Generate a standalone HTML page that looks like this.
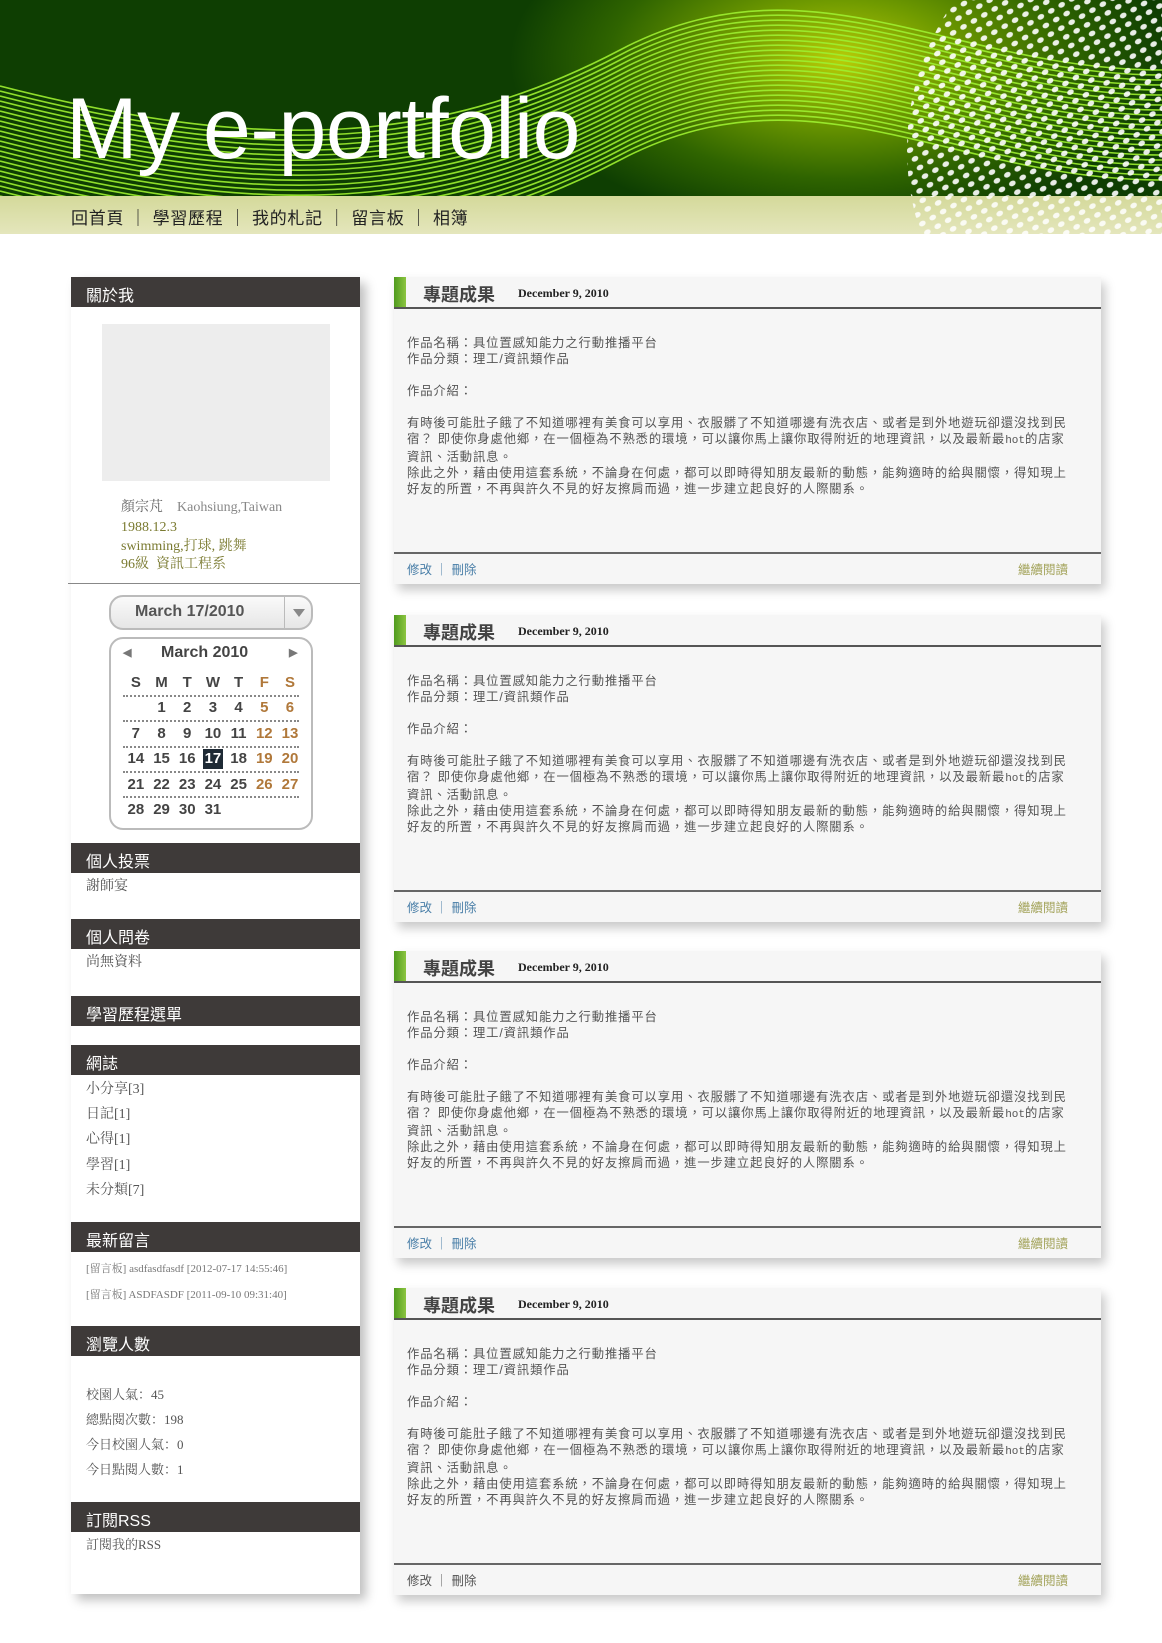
<!DOCTYPE html>
<html><head><meta charset="utf-8"><style>
*{margin:0;padding:0;box-sizing:border-box}
body{width:1162px;height:1643px;background:#fff;font-family:"Liberation Sans","Noto Sans CJK TC",sans-serif;position:relative;overflow:hidden}
.hdr{position:absolute;left:0;top:0;width:1162px;height:196px;overflow:hidden;background:radial-gradient(ellipse 330px 170px at 840px 60px,#b8cc08 0%,#6f9a00 35%,#2f6400 70%,#0e3e02 100%),#0e3e02}
.nav{position:absolute;left:0;top:196px;width:1162px;height:38px;background:linear-gradient(#d4d99a,#e4e6bc);}
.nav span{position:absolute;left:71px;top:8px;font-size:17px;color:#222;letter-spacing:0.7px}
.title{position:absolute;left:66px;top:80px;font-size:86px;color:#fff;font-family:"Liberation Sans",sans-serif;letter-spacing:-0.5px}
.side{position:absolute;left:71px;top:277px;width:289px;height:1317px;background:#fff;box-shadow:6px 6px 10px rgba(0,0,0,.25)}
.bar{position:absolute;left:0;width:289px;height:30px;background:#3e3a39;color:#fff;font-size:16px;padding:5px 0 0 15px}
.it{position:absolute;left:15px;font-family:"Liberation Serif","Noto Serif CJK SC",serif;font-size:14px;color:#555}
.post{position:absolute;left:394px;width:707px;height:307px;background:#f6f6f6;box-shadow:4px 6px 10px rgba(0,0,0,.22)}
.post .gb{position:absolute;left:0;top:0;width:12px;height:31px;background:linear-gradient(90deg,#4f9a1e,#8cc540)}
.post .tl{position:absolute;left:0;top:30px;width:707px;height:2px;background:#555}
.post .h{position:absolute;left:29px;top:4px;font-size:18px;font-weight:bold;color:#444}
.post .d{position:absolute;left:124px;top:9px;font-family:"Liberation Serif",serif;font-weight:bold;font-size:12px;color:#222}
.post .c{position:absolute;left:13px;top:58px;width:672px;font-size:12.3px;letter-spacing:0.9px;line-height:16px;color:#555}
.post .c b{font-family:"Liberation Mono",monospace;font-weight:normal;letter-spacing:0;font-size:11px}
.post .fl{position:absolute;left:0;top:275px;width:707px;height:2px;background:#666}
.post .f{position:absolute;left:13px;top:282px;font-size:12.5px;color:#4a7fa8}
.post .m{position:absolute;right:33px;top:282px;font-size:12.5px;color:#a3a35a}
.cal{position:absolute;font-family:"Liberation Sans",sans-serif;font-weight:bold;font-size:15px;color:#444}
.w{color:#b0783a}
.dl{position:absolute;left:52px;width:176px;border-top:2px dotted #888}
</style></head><body>
<div class="hdr">
<svg width="1162" height="196" style="position:absolute;left:0;top:0">
<defs>
<pattern id="dots" width="12" height="10" patternUnits="userSpaceOnUse" patternTransform="rotate(-30)"><ellipse cx="5" cy="5" rx="3.5" ry="2.6" fill="#fff"/></pattern>
<clipPath id="cc"><circle cx="1165" cy="150" r="258"/></clipPath>
<path id="wv" d="M0 86 C 250 150, 430 150, 620 50 S 950 70, 1162 70" fill="none" stroke="#9ef030" stroke-width="1.6"/>
</defs>
<g opacity="0.9">
<use href="#wv"/><use href="#wv" y="5"/><use href="#wv" y="10"/><use href="#wv" y="15"/><use href="#wv" y="20"/><use href="#wv" y="25"/><use href="#wv" y="30"/><use href="#wv" y="35"/><use href="#wv" y="40"/><use href="#wv" y="45"/><use href="#wv" y="50"/><use href="#wv" y="55"/><use href="#wv" y="60"/><use href="#wv" y="65"/><use href="#wv" y="70"/><use href="#wv" y="75"/><use href="#wv" y="80"/><use href="#wv" y="85"/><use href="#wv" y="90"/><use href="#wv" y="95"/><use href="#wv" y="100"/><use href="#wv" y="105"/><use href="#wv" y="110"/>
</g>
<g clip-path="url(#cc)"><rect x="880" y="-120" width="300" height="520" fill="url(#dots)" opacity="0.9"/></g>
</svg>
<div class="title">My e-portfolio</div>
</div>
<div class="nav"><svg width="1162" height="38" style="position:absolute;left:0;top:0"><defs><pattern id="d2" width="12" height="10" patternUnits="userSpaceOnUse" patternTransform="rotate(-30)"><ellipse cx="5" cy="5" rx="3.5" ry="2.6" fill="#fff"/></pattern><clipPath id="c2"><circle cx="1165" cy="-46" r="258"/></clipPath></defs><g clip-path="url(#c2)"><rect x="880" y="0" width="300" height="38" fill="url(#d2)" opacity="0.85"/></g></svg><span>回首頁 ｜ 學習歷程 ｜ 我的札記 ｜ 留言板 ｜ 相簿</span></div>

<div class="side">
<div class="bar" style="top:0">關於我</div>
<div style="position:absolute;left:31px;top:47px;width:228px;height:157px;background:#ededed"></div>
<div class="it" style="top:219px;left:50px;color:#666">顏宗芃　<span style="color:#888">Kaohsiung,Taiwan</span></div>
<div class="it" style="top:242px;left:50px;color:#7a7a30;line-height:18.5px">1988.12.3<br>swimming,打球, 跳舞<br>96級&nbsp; 資訊工程系</div>
<div style="position:absolute;left:-3px;top:306px;width:292px;height:1px;background:#888"></div>
<div style="position:absolute;left:38px;top:318px;width:204px;height:35px;border:2px solid #bbb;border-radius:14px;background:linear-gradient(#fafafa,#e6e6e6)"></div>
<div style="position:absolute;left:213px;top:320px;width:1px;height:31px;background:#bbb"></div>
<div style="position:absolute;left:222px;top:332px;width:0;height:0;border-left:6px solid transparent;border-right:6px solid transparent;border-top:8px solid #888"></div>
<div class="cal" style="left:64px;top:326px;font-size:16px;color:#555">March 17/2010</div>
<div style="position:absolute;left:38px;top:360px;width:204px;height:193px;border:2px solid #bbb;border-radius:14px;background:#fff"></div>
<div class="cal" style="left:52px;top:369px;font-size:11px;color:#777">◀</div>
<div class="cal" style="left:218px;top:369px;font-size:11px;color:#777">▶</div>
<div class="cal" style="left:90px;top:367px;font-size:16px">March 2010</div>
<div class="cal" style="left:52px;top:393px;line-height:25.4px">
<div style="display:grid;grid-template-columns:repeat(7,25.7px);text-align:center;width:180px">
<span>S</span><span>M</span><span>T</span><span>W</span><span>T</span><span class="w">F</span><span class="w">S</span>
<span></span><span>1</span><span>2</span><span>3</span><span>4</span><span class="w">5</span><span class="w">6</span>
<span>7</span><span>8</span><span>9</span><span>10</span><span>11</span><span class="w">12</span><span class="w">13</span>
<span>14</span><span>15</span><span>16</span><span style="background:#1e2a35;color:#fff;margin:3px 3px;line-height:19px">17</span><span>18</span><span class="w">19</span><span class="w">20</span>
<span>21</span><span>22</span><span>23</span><span>24</span><span>25</span><span class="w">26</span><span class="w">27</span>
<span>28</span><span>29</span><span>30</span><span>31</span>
</div></div>
<div class="dl" style="top:418px"></div>
<div class="dl" style="top:443px"></div>
<div class="dl" style="top:469px"></div>
<div class="dl" style="top:494px"></div>
<div class="dl" style="top:519px"></div>

<div class="bar" style="top:566px">個人投票</div>
<div class="it" style="top:598px">謝師宴</div>
<div class="bar" style="top:642px">個人問卷</div>
<div class="it" style="top:674px">尚無資料</div>
<div class="bar" style="top:719px">學習歷程選單</div>
<div class="bar" style="top:768px">網誌</div>
<div class="it" style="top:800px;line-height:25.2px">小分享[3]<br>日記[1]<br>心得[1]<br>學習[1]<br>未分類[7]</div>
<div class="bar" style="top:945px">最新留言</div>
<div class="it" style="top:979px;font-size:11px;color:#777;line-height:26px">[留言板] asdfasdfasdf [2012-07-17 14:55:46]<br>[留言板] ASDFASDF [2011-09-10 09:31:40]</div>
<div class="bar" style="top:1049px">瀏覽人數</div>
<div class="it" style="top:1105px;font-size:13px;line-height:25px">校園人氣：45<br>總點閱次數：198<br>今日校園人氣：0<br>今日點閱人數：1</div>
<div class="bar" style="top:1225px">訂閱RSS</div>
<div class="it" style="top:1257px;font-size:13px">訂閱我的RSS</div>
</div>

<div class="post" style="top:277px"><div class="gb"></div><div class="tl"></div><div class="h">專題成果</div><div class="d">December 9, 2010</div>
<div class="c">作品名稱：具位置感知能力之行動推播平台<br>作品分類：理工/資訊類作品<br><br>作品介紹：<br><br>有時後可能肚子餓了不知道哪裡有美食可以享用、衣服髒了不知道哪邊有洗衣店、或者是到外地遊玩卻還沒找到民<br>宿？ 即使你身處他鄉，在一個極為不熟悉的環境，可以讓你馬上讓你取得附近的地理資訊，以及最新最<b>hot</b>的店家<br>資訊、活動訊息。<br>除此之外，藉由使用這套系統，不論身在何處，都可以即時得知朋友最新的動態，能夠適時的給與關懷，得知現上<br>好友的所置，不再與許久不見的好友擦肩而過，進一步建立起良好的人際關系。</div>
<div class="fl"></div><div class="f">修改 ｜ 刪除</div><div class="m">繼續閱讀</div></div>

<div class="post" style="top:615px"><div class="gb"></div><div class="tl"></div><div class="h">專題成果</div><div class="d">December 9, 2010</div>
<div class="c">作品名稱：具位置感知能力之行動推播平台<br>作品分類：理工/資訊類作品<br><br>作品介紹：<br><br>有時後可能肚子餓了不知道哪裡有美食可以享用、衣服髒了不知道哪邊有洗衣店、或者是到外地遊玩卻還沒找到民<br>宿？ 即使你身處他鄉，在一個極為不熟悉的環境，可以讓你馬上讓你取得附近的地理資訊，以及最新最<b>hot</b>的店家<br>資訊、活動訊息。<br>除此之外，藉由使用這套系統，不論身在何處，都可以即時得知朋友最新的動態，能夠適時的給與關懷，得知現上<br>好友的所置，不再與許久不見的好友擦肩而過，進一步建立起良好的人際關系。</div>
<div class="fl"></div><div class="f">修改 ｜ 刪除</div><div class="m">繼續閱讀</div></div>

<div class="post" style="top:951px"><div class="gb"></div><div class="tl"></div><div class="h">專題成果</div><div class="d">December 9, 2010</div>
<div class="c">作品名稱：具位置感知能力之行動推播平台<br>作品分類：理工/資訊類作品<br><br>作品介紹：<br><br>有時後可能肚子餓了不知道哪裡有美食可以享用、衣服髒了不知道哪邊有洗衣店、或者是到外地遊玩卻還沒找到民<br>宿？ 即使你身處他鄉，在一個極為不熟悉的環境，可以讓你馬上讓你取得附近的地理資訊，以及最新最<b>hot</b>的店家<br>資訊、活動訊息。<br>除此之外，藉由使用這套系統，不論身在何處，都可以即時得知朋友最新的動態，能夠適時的給與關懷，得知現上<br>好友的所置，不再與許久不見的好友擦肩而過，進一步建立起良好的人際關系。</div>
<div class="fl"></div><div class="f">修改 ｜ 刪除</div><div class="m">繼續閱讀</div></div>

<div class="post" style="top:1288px"><div class="gb"></div><div class="tl"></div><div class="h">專題成果</div><div class="d">December 9, 2010</div>
<div class="c">作品名稱：具位置感知能力之行動推播平台<br>作品分類：理工/資訊類作品<br><br>作品介紹：<br><br>有時後可能肚子餓了不知道哪裡有美食可以享用、衣服髒了不知道哪邊有洗衣店、或者是到外地遊玩卻還沒找到民<br>宿？ 即使你身處他鄉，在一個極為不熟悉的環境，可以讓你馬上讓你取得附近的地理資訊，以及最新最<b>hot</b>的店家<br>資訊、活動訊息。<br>除此之外，藉由使用這套系統，不論身在何處，都可以即時得知朋友最新的動態，能夠適時的給與關懷，得知現上<br>好友的所置，不再與許久不見的好友擦肩而過，進一步建立起良好的人際關系。</div>
<div class="fl"></div><div class="f" style="color:#555">修改 ｜ 刪除</div><div class="m">繼續閱讀</div></div>
</body></html>
